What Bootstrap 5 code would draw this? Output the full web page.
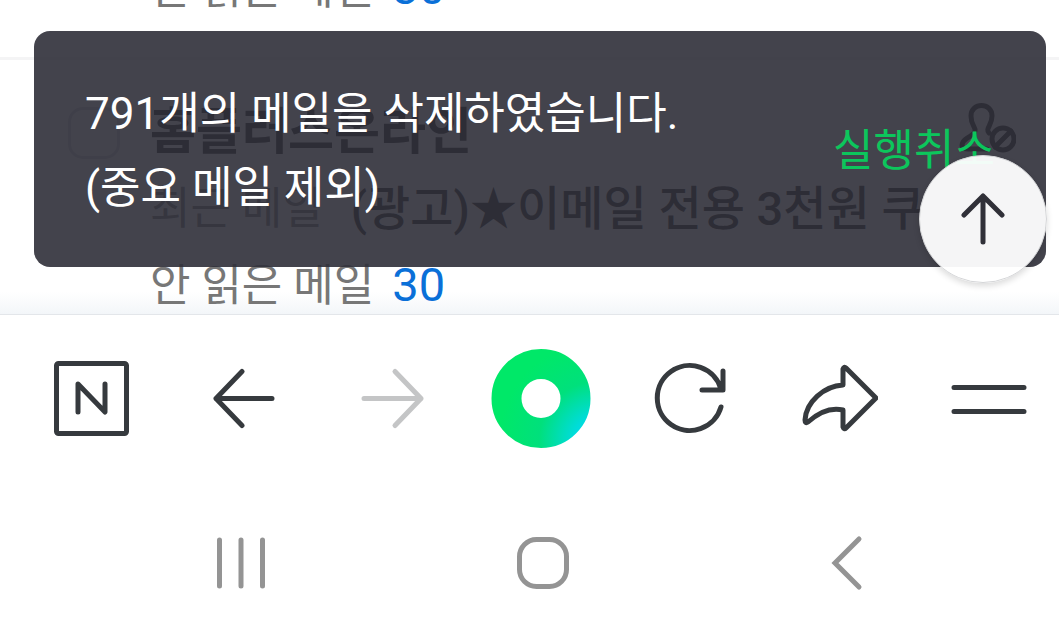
<!DOCTYPE html>
<html lang="ko">
<head>
<meta charset="utf-8">
<meta name="viewport" content="width=device-width, initial-scale=1">
<title>메일</title>
<link href="https://cdn.jsdelivr.net/npm/bootstrap@5.3.0/dist/css/bootstrap.min.css" rel="stylesheet">
<style>
  body { font-family: Roboto, "Noto Sans CJK KR", sans-serif; font-size: 44px; line-height: 60px; color: #222; }
  svg { display: block; fill: none; stroke: currentColor; stroke-width: 5; stroke-linecap: round; stroke-linejoin: round; }
  .mail-view { flex: 1 1 0; min-height: 0; }
  .mail-list { margin-bottom: -2px; }
  .mail-item { padding: 42px 43px 38px 68px; gap: 30px; border-bottom: 3px solid #f4f4f5; }
  .mail-item:last-child { padding-bottom: 0; border-bottom: 0; }
  .mail-check.form-check-input { width: 52px; height: 52px; margin: 5px 0 0; border: 3px solid #d4d5d9; border-radius: 15px; }
  .sender { font-size: 50px; font-weight: 700; margin-bottom: 17px; }
  .meta-label { color: #777; }
  .subject { font-size: 47px; font-weight: 500; margin-left: 28px; }
  .count-link { font-size: 47px; color: #0a70d8; margin-left: 18px; }
  .block-btn { color: #222; }
  .fade-edge { height: 22px; background: linear-gradient(rgba(243, 246, 249, 0), #f3f6f9); }
  .undo-toast { top: 31px; left: 34px; right: 13px; padding: 46px 51px 42px; border-radius: 16px; background: rgba(47, 47, 56, .9); color: #fff; line-height: 74px; }
  .undo-btn { color: #0cc65c; }
  .top-btn { right: 12px; bottom: 31px; width: 128px; height: 128px; background: rgba(255, 255, 255, .95); border: 1px solid #d5d6d8; color: #303038; box-shadow: 0 3px 6px rgba(0, 0, 0, .14); }
  .plain-btn { background: none; border: 0; padding: 0; }
  .browser-bar { padding: 46px 32px 45px 54px; border-top: 1px solid #e3e6ea; color: #363a3e; }
  .browser-bar .forward { color: #c4c5c6; }
  .system-bar { padding: 43px 62px 43px 90px; color: #949494; }
</style>
</head>
<body>
<div class="vh-100 d-flex flex-column overflow-hidden bg-white">
  <main class="mail-view position-relative overflow-hidden d-flex flex-column justify-content-end">
    <div class="fade-edge position-absolute bottom-0 start-0 end-0"></div>
    <ul class="mail-list list-unstyled position-relative">
      <li class="mail-item d-flex">
        <div class="ps-5 ms-1"></div>
        <div class="flex-grow-1"><span class="meta-label">안 읽은 메일</span><a href="#" class="count-link text-decoration-none">30</a></div>
      </li>
      <li class="mail-item d-flex align-items-start">
        <input type="checkbox" id="pick" class="mail-check form-check-input flex-shrink-0" aria-labelledby="sender">
        <div class="flex-grow-1 overflow-hidden">
          <div class="d-flex justify-content-between">
            <label for="pick" id="sender" class="sender">홈플러스온라인</label>
            <button type="button" class="block-btn plain-btn align-self-start" aria-label="수신차단">
              <svg width="58" height="56" viewBox="0 0 58 56">
                <path d="M29 47H10C4 47 3 44 5 40C8 35 16 34 17 29C18 25 13 24 13 14C13 0 34 0 34 14C34 24 27 26 31 31"/>
                <circle cx="45" cy="37" r="11"/><path d="M37 45L53 29"/>
              </svg>
            </button>
          </div>
          <div class="d-flex mb-3 text-nowrap">
            <span class="meta-label">최근 메일</span>
            <a href="#" class="subject text-reset text-decoration-none">(광고)★이메일 전용 3천원 쿠</a>
          </div>
          <div><span class="meta-label">안 읽은 메일</span><a href="#" class="count-link text-decoration-none">30</a></div>
        </div>
      </li>
    </ul>
    <div class="undo-toast position-absolute d-flex align-items-center justify-content-between" role="status">
      <div>791개의 메일을 삭제하였습니다.<br>(중요 메일 제외)</div>
      <button type="button" class="undo-btn plain-btn text-nowrap">실행취소</button>
    </div>
    <button type="button" class="top-btn position-absolute rounded-circle d-flex align-items-center justify-content-center p-0" aria-label="맨 위로">
      <svg width="44" height="54" viewBox="0 0 44 54"><path d="M22 50V4M3 23L22 4L41 23"/></svg>
    </button>
  </main>

  <nav class="browser-bar d-flex justify-content-between bg-white" aria-label="브라우저">
    <button type="button" class="plain-btn text-reset" aria-label="네이버 홈">
      <svg width="76" height="76" viewBox="0 0 76 76"><rect x="2.500" y="2.500" width="70" height="70" rx="2"/><path d="M24 51V23L51 51V23"/></svg>
    </button>
    <button type="button" class="plain-btn text-reset" aria-label="뒤로">
      <svg width="76" height="76" viewBox="0 0 76 76"><path d="M68 37.500H12M38 10.500L12 37.500L38 64.500"/></svg>
    </button>
    <button type="button" class="plain-btn forward" aria-label="앞으로">
      <svg width="76" height="76" viewBox="0 0 76 76"><path d="M11 37.500H68M42 10.500L68 37.500L42 64.500"/></svg>
    </button>
    <button type="button" class="plain-btn" aria-label="그린닷">
      <svg class="overflow-visible" width="76" height="76" viewBox="0 0 76 76">
        <defs><radialGradient id="dot" gradientUnits="userSpaceOnUse" cx="96" cy="80" r="100"><stop offset="0" stop-color="#00dcf0"/><stop offset=".25" stop-color="#00dcdc"/><stop offset=".6" stop-color="#00e07c"/><stop offset="1" stop-color="#00e868"/></radialGradient></defs>
        <circle cx="38" cy="37.500" r="34.500" stroke="url(#dot)" stroke-width="30"/>
      </svg>
    </button>
    <button type="button" class="plain-btn text-reset" aria-label="새로고침">
      <svg width="76" height="76" viewBox="0 0 76 76"><path d="M69 46A32.500 32.500 0 1 1 69 28M71 10V29H50"/></svg>
    </button>
    <button type="button" class="plain-btn text-reset" aria-label="공유">
      <svg width="76" height="76" viewBox="0 0 76 76"><path d="M41 24V8Q42 5 44 7L74 37L44 67Q42 69 41 66V49C28 46 16 52 6 61Q3 63 3 59C4 41 22 25 41 24Z"/></svg>
    </button>
    <button type="button" class="plain-btn text-reset" aria-label="메뉴">
      <svg width="76" height="76" viewBox="0 0 76 76"><path d="M3 26.500H73M3 50.500H73"/></svg>
    </button>
  </nav>

  <nav class="system-bar d-flex justify-content-around bg-white" aria-label="시스템">
    <button type="button" class="plain-btn text-reset" aria-label="최근 앱">
      <svg width="76" height="76" viewBox="0 0 76 76"><path d="M16.500 15V61M38 15V61M59.500 15V61"/></svg>
    </button>
    <button type="button" class="plain-btn text-reset" aria-label="홈">
      <svg width="76" height="76" viewBox="0 0 76 76"><rect x="14.500" y="14.500" width="47" height="47" rx="17"/></svg>
    </button>
    <button type="button" class="plain-btn text-reset" aria-label="뒤로">
      <svg width="76" height="76" viewBox="0 0 76 76"><path stroke-linejoin="miter" d="M51 14L27 38L51 62"/></svg>
    </button>
  </nav>
</div>
</body>
</html>
